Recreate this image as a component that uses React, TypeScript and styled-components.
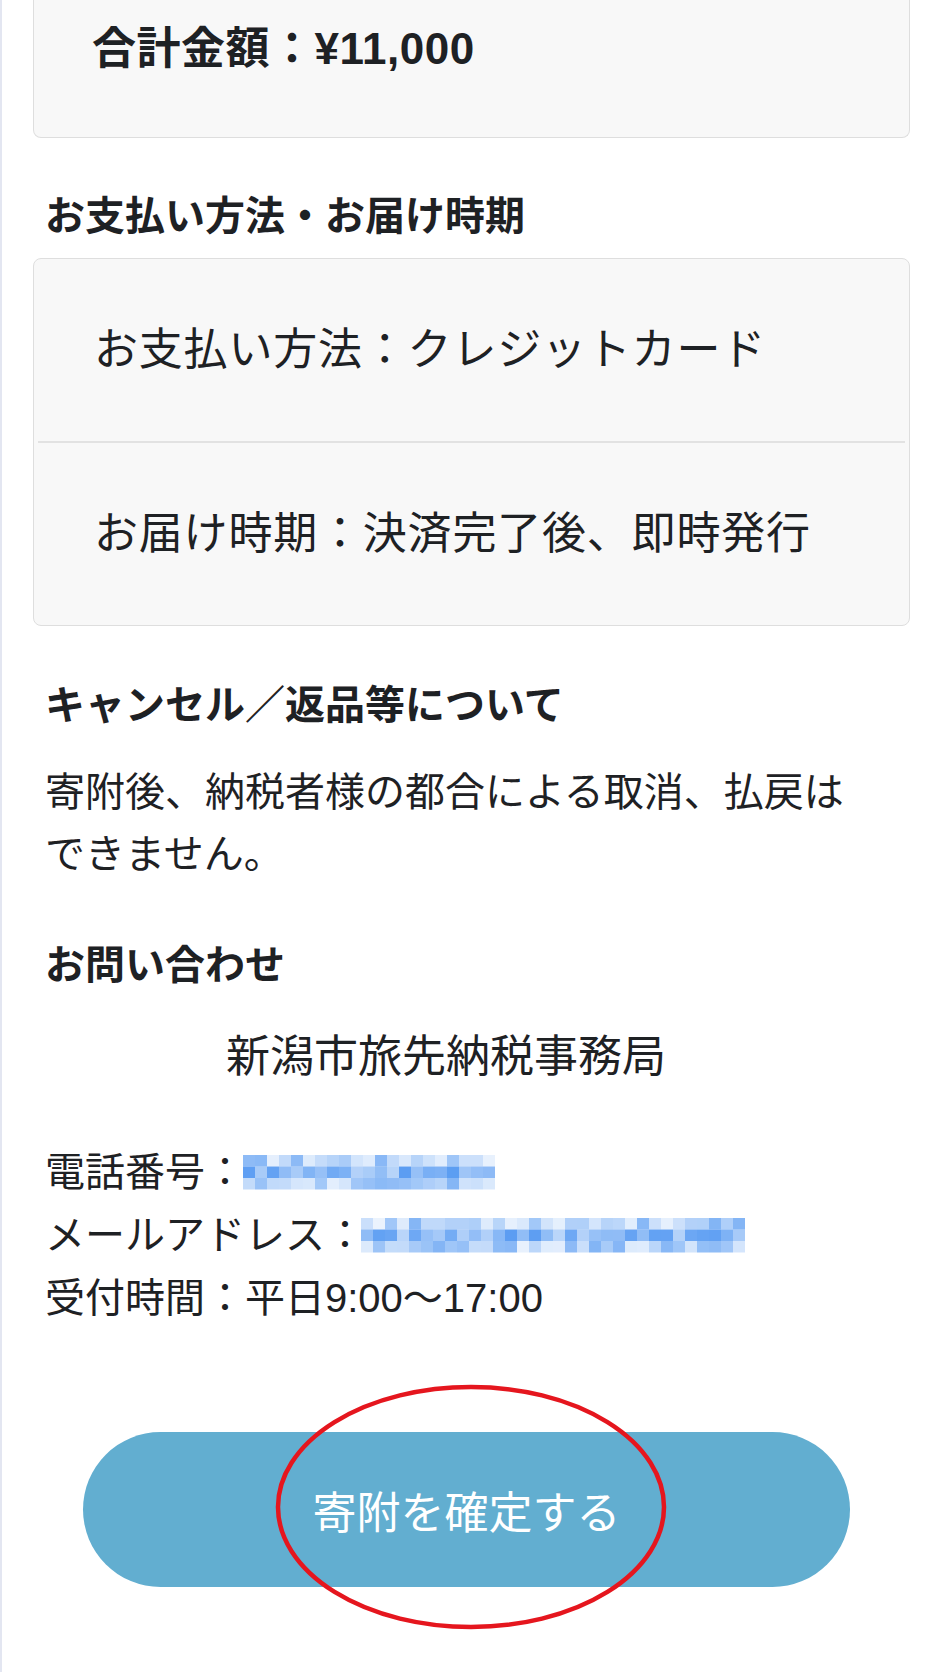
import React from 'react';
import styled, { createGlobalStyle } from 'styled-components';

const GlobalStyle = createGlobalStyle`
  html, body {
    margin: 0;
    padding: 0;
    background: #ffffff;
  }
  body {
    font-family: "Liberation Sans", "Noto Sans CJK JP", sans-serif;
    color: #1e2124;
  }
  * {
    box-sizing: border-box;
  }
`;

const Page = styled.div`
  min-height: 1672px;
  width: 940px;
  border-left: 2px solid #e3e6f1;
  padding: 0 30px 0 31px;
  display: flex;
  flex-direction: column;
`;

const TotalCard = styled.div`
  background: #f8f8f8;
  border: 1.5px solid #dedede;
  border-top: none;
  border-radius: 0 0 8px 8px;
  padding: 17px 0 56px 58px;
`;

const TotalText = styled.div`
  font-size: 44px;
  line-height: 64px;
  font-weight: 700;
  letter-spacing: 0.5px;
`;

const SectionTitle = styled.h2<{ $top: number; $bottom: number }>`
  margin: ${(p) => p.$top}px 0 ${(p) => p.$bottom}px;
  padding-left: 12px;
  font-size: 40px;
  line-height: 60px;
  font-weight: 700;
`;

const InfoCard = styled.div`
  background: #f8f8f8;
  border: 1.5px solid #dedede;
  border-radius: 8px;
  padding: 0 4px;
`;

const InfoRow = styled.div`
  padding: 58px 0 58px 56px;
  font-size: 44px;
  line-height: 66px;
  letter-spacing: 0.8px;
  border-bottom: 2px solid #e2e2e2;

  &:last-child {
    border-bottom: none;
  }
`;

const TextBlock = styled.div<{ $top: number }>`
  margin-top: ${(p) => p.$top}px;
  padding: 0 63px 0 12px;
`;

const Paragraph = styled.p`
  margin: 0;
  font-size: 40px;
  line-height: 62px;
`;

const OfficeName = styled.div`
  font-size: 44px;
  line-height: 66px;
  text-align: center;
`;

const ContactLine = styled.div`
  display: flex;
  align-items: center;
  font-size: 40px;
  line-height: 63px;
`;

const Redacted = styled.span<{ $shift: number }>`
  display: inline-flex;
  margin-left: ${(p) => p.$shift}px;
`;

const ButtonArea = styled.div`
  position: relative;
  margin: 102px 0 0 50px;
  width: 767px;
`;

const ConfirmButton = styled.button`
  width: 100%;
  height: 155px;
  border: none;
  border-radius: 78px;
  background: #62aed0;
  color: #ffffff;
  font-family: "Liberation Sans", "Noto Sans CJK JP", sans-serif;
  font-size: 44px;
  font-weight: 400;
  cursor: pointer;
`;

const Circle = styled.svg`
  position: absolute;
  left: 192px;
  top: -48px;
  pointer-events: none;
`;

// simple seeded generator so the mosaic stays the same on every render
const seeded = (seed: number) => {
  let s = seed;
  return () => {
    s = (s * 9301 + 49297) % 233280;
    return s / 233280;
  };
};

const Mosaic: React.FC<{ width: number; seed: number }> = ({ width, seed }) => {
  const cell = 12;
  const rows = 3;
  const cols = Math.round(width / cell);
  const rand = seeded(seed);
  const cells = [];
  for (let r = 0; r < rows; r++) {
    for (let c = 0; c < cols; c++) {
      const base = r === 1 ? 0.35 : 0.1;
      const alpha = Math.min(0.85, base + rand() * 0.55);
      cells.push(
        <rect
          key={`${r}-${c}`}
          x={c * cell}
          y={r * 11.5}
          width={cell}
          height={11.5}
          fill="#3f8cf0"
          opacity={alpha}
        />
      );
    }
  }
  return (
    <svg width={cols * cell} height={34.5} viewBox={`0 0 ${cols * cell} 34.5`}>
      {cells}
    </svg>
  );
};

const App: React.FC = () => {
  return (
    <>
      <GlobalStyle />
      <Page>
        <TotalCard>
          <TotalText>合計金額：¥11,000</TotalText>
        </TotalCard>

        <SectionTitle $top={48} $bottom={12}>
          お支払い方法・お届け時期
        </SectionTitle>
        <InfoCard>
          <InfoRow>お支払い方法：クレジットカード</InfoRow>
          <InfoRow>お届け時期：決済完了後、即時発行</InfoRow>
        </InfoCard>

        <SectionTitle $top={49} $bottom={26}>
          キャンセル／返品等について
        </SectionTitle>
        <TextBlock $top={0}>
          <Paragraph>寄附後、納税者様の都合による取消、払戻はできません。</Paragraph>
        </TextBlock>

        <SectionTitle $top={50} $bottom={0}>
          お問い合わせ
        </SectionTitle>
        <TextBlock $top={29}>
          <OfficeName>新潟市旅先納税事務局</OfficeName>
        </TextBlock>

        <TextBlock $top={51}>
          <ContactLine>
            電話番号：
            <Redacted $shift={-2}>
              <Mosaic width={256} seed={17} />
            </Redacted>
          </ContactLine>
          <ContactLine>
            メールアドレス：
            <Redacted $shift={-4}>
              <Mosaic width={381} seed={53} />
            </Redacted>
          </ContactLine>
          <ContactLine>受付時間：平日9:00〜17:00</ContactLine>
        </TextBlock>

        <ButtonArea>
          <ConfirmButton type="button">寄附を確定する</ConfirmButton>
          <Circle width="392" height="246" viewBox="0 0 392 246">
            <ellipse cx="196" cy="123" rx="193" ry="120" fill="none" stroke="#e5161e" strokeWidth="4.5" />
          </Circle>
        </ButtonArea>
      </Page>
    </>
  );
};

export default App;
